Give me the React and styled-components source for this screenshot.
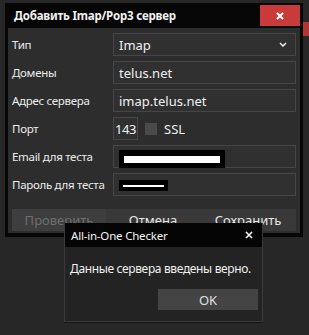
import React from 'react';
import styled, { createGlobalStyle } from 'styled-components';

const Global = createGlobalStyle`
  html, body { margin: 0; padding: 0; background: #262626; }
  body { font-family: 'Noto Sans', 'Open Sans', sans-serif; }
`;

const Desktop = styled.div`
  position: relative;
  width: 309px;
  height: 335px;
  overflow: hidden;
  background: #272727;
  font-size: 12px;
  color: #e8e8e8;

  .strip {
    position: absolute;
    right: 0;
    top: 22px;
    width: 6px;
    height: 14px;
    background: #b33434;
  }
`;

const Window = styled.div`
  position: absolute;
  left: 5px;
  top: 3px;
  width: 298px;
  height: 234px;
  background: #060606;
  box-sizing: border-box;
  padding: 0 3px 4px;
  display: flex;
  flex-direction: column;
`;

const TitleBar = styled.div`
  height: 25px;
  display: flex;
  align-items: flex-start;
  justify-content: space-between;
  padding-left: 6px;

  h1 {
    margin: 0;
    font-size: 11.5px;
    font-weight: 700;
    line-height: 25px;
    color: #f2f2f2;
    letter-spacing: -0.2px;
  }
`;

const CloseRed = styled.div`
  width: 40px;
  height: 21px;
  margin-top: 2px;
  background: #c93a3a;
  display: flex;
  align-items: center;
  justify-content: center;
`;

const Body = styled.div`
  flex: 1;
  background: #2d2d2d;
  padding: 5px 4px 0 4px;
  display: flex;
  flex-direction: column;
`;

const Row = styled.div`
  display: grid;
  grid-template-columns: 101px 1fr;
  align-items: center;
  height: 23px;
  margin-bottom: 5px;

  label {
    font-size: 11.5px;
    letter-spacing: -0.3px;
    white-space: nowrap;
    color: #ececec;
  }
`;

const Field = styled.div`
  height: 23px;
  box-sizing: border-box;
  border: 1px solid #464646;
  background: #303030;
  display: flex;
  align-items: center;
  font-size: 13px;
  color: #f0f0f0;
  width: ${p => (p.$narrow ? '25px' : 'auto')};
  justify-content: ${p => (p.$narrow ? 'center' : 'space-between')};
  padding: ${p => (p.$narrow ? '0' : '0 8px 0 5px')};
  letter-spacing: ${p => (p.$narrow ? '-0.5px' : '0')};
`;

const PortLine = styled.div`
  display: flex;
  align-items: center;
  gap: 7px;
  font-size: 13px;
  color: #eee;
`;

const Check = styled.span`
  width: 12px;
  height: 12px;
  background: #4a4a4a;
  display: inline-block;
`;

const Redact = styled.span`
  display: flex;
  align-items: center;
  justify-content: center;
  background: #000;
  width: ${p => p.$w}px;
  height: ${p => p.$h}px;
  margin-top: ${p => p.$top}px;
  align-self: flex-start;
`;

const RedactBar = styled.i`
  display: block;
  background: #fff;
  width: ${p => p.$w}px;
  height: ${p => p.$h}px;
`;

const ButtonBar = styled.div`
  margin-top: 8px;
  height: 22px;
  background: #393939;
  display: grid;
  grid-template-columns: 94px 94px 1fr;
`;

const Btn = styled.div`
  display: flex;
  align-items: center;
  justify-content: center;
  font-size: 13px;
  color: ${p => (p.$disabled ? '#6e6e6e' : '#e6e6e6')};
  background: ${p => (p.$disabled ? '#3e3e3e' : 'transparent')};
`;

const MsgBox = styled.div`
  position: absolute;
  left: 64px;
  top: 223px;
  width: 199px;
  height: 99px;
  box-sizing: border-box;
  background: #232323;
  border: 1px solid #3a3a3a;
  border-top: none;
  box-shadow: 0 1px 0 #141414;
  display: flex;
  flex-direction: column;
`;

const MsgTitle = styled.div`
  height: 24px;
  background: #050505;
  display: flex;
  align-items: center;
  justify-content: space-between;
  padding: 0 9px 0 6px;
  font-size: 11.5px;
  letter-spacing: -0.2px;
  color: #f4f4f4;
`;

const MsgText = styled.p`
  margin: 13px 0 0 5px;
  font-size: 12px;
  white-space: nowrap;
  color: #f0f0f0;
  letter-spacing: -0.35px;
`;

const OkButton = styled.div`
  margin: 12px 4px 0 auto;
  width: 100px;
  height: 21px;
  background: #444444;
  display: flex;
  align-items: center;
  justify-content: center;
  font-size: 13px;
  color: #e0e0e0;
`;

const Cross = ({ size = 8, w = 2 }) => (
  <svg width={size} height={size} viewBox="0 0 8 8">
    <path d="M1 1 L7 7 M7 1 L1 7" stroke="#fff" strokeWidth={w} />
  </svg>
);

const Chevron = () => (
  <svg width="8" height="5" viewBox="0 0 8 5">
    <polyline points="1,1 4,4 7,1" fill="none" stroke="#fff" strokeWidth="1.4" />
  </svg>
);

const App = () => (
  <Desktop>
    <Global />
    <div className="strip" />
    <Window>
      <TitleBar>
        <h1>Добавить Imap/Pop3 сервер</h1>
        <CloseRed>
          <Cross size={8} w={2} />
        </CloseRed>
      </TitleBar>
      <Body>
        <Row>
          <label>Тип</label>
          <Field>
            Imap
            <Chevron />
          </Field>
        </Row>
        <Row>
          <label>Домены</label>
          <Field>telus.net</Field>
        </Row>
        <Row>
          <label>Адрес сервера</label>
          <Field>imap.telus.net</Field>
        </Row>
        <Row>
          <label>Порт</label>
          <PortLine>
            <Field $narrow>143</Field>
            <Check />
            <span>SSL</span>
          </PortLine>
        </Row>
        <Row>
          <label>Email для теста</label>
          <Field>
            <Redact $w={106} $h={18} $top={4}>
              <RedactBar $w={96} $h={7} />
            </Redact>
          </Field>
        </Row>
        <Row>
          <label>Пароль для теста</label>
          <Field>
            <Redact $w={49} $h={11} $top={6}>
              <RedactBar $w={41} $h={2} />
            </Redact>
          </Field>
        </Row>
        <ButtonBar>
          <Btn $disabled>Проверить</Btn>
          <Btn>Отмена</Btn>
          <Btn>Сохранить</Btn>
        </ButtonBar>
      </Body>
    </Window>
    <MsgBox>
      <MsgTitle>
        <span>All-in-One Checker</span>
        <Cross size={8} w={1.6} />
      </MsgTitle>
      <MsgText>Данные сервера введены верно.</MsgText>
      <OkButton>OK</OkButton>
    </MsgBox>
  </Desktop>
);

export default App;
